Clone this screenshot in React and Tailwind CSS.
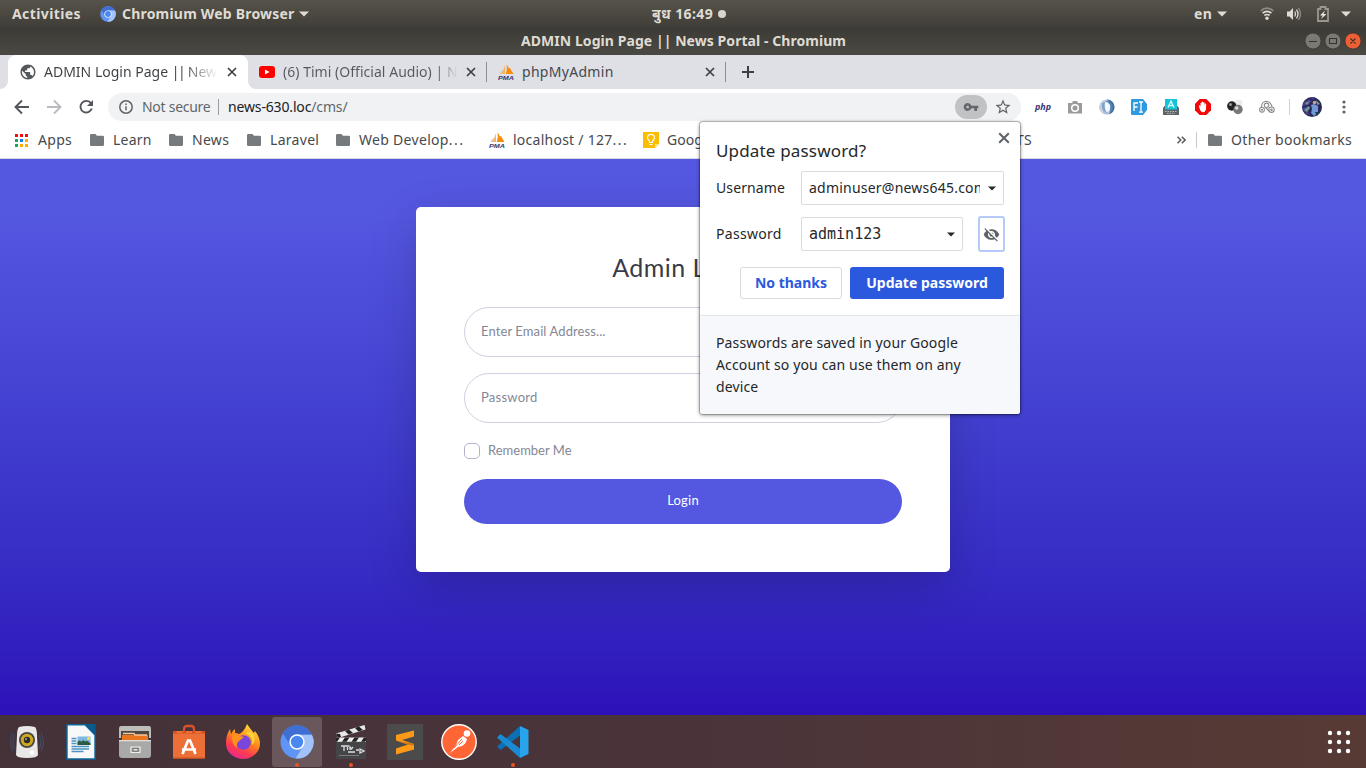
import React from "react";
import { MdPublic, MdVisibilityOff, MdVpnKey, MdStarBorder } from "react-icons/md";

const Caret = ({ className = "h-[6px] w-[10px]" }) => (
  <svg viewBox="0 0 10 6" className={`shrink-0 ${className}`} fill="currentColor">
    <path d="M0 .5h10L5 5.5z" />
  </svg>
);

const Close = ({ className = "" }) => (
  <svg viewBox="0 0 10 10" className={`shrink-0 ${className}`} fill="none" stroke="currentColor" strokeWidth="1.7">
    <path d="M1 1l8 8M9 1L1 9" />
  </svg>
);

const Chromium = ({ className = "" }) => (
  <svg viewBox="0 0 34 34" className={`shrink-0 ${className}`}>
    <circle cx="17" cy="17" r="16.500" fill="#5f95f6" />
    <path d="M2.800 8.500A16.500 16.500 0 0 1 31.900 9.700H17A7.500 7.500 0 0 0 10 19.500z" fill="#3f6fd3" />
    <path d="M17 9.700H31.900A16.500 16.500 0 0 1 15.500 33.500L23.500 20.700z" fill="#a2c2fa" />
    <circle cx="17" cy="17" r="7.700" fill="#fff" />
    <circle cx="17" cy="17" r="6.200" fill="#4a87ef" />
  </svg>
);

const Pma = () => (
  <svg viewBox="0 0 16 16" className="size-4 shrink-0">
    <path d="M7 1L7 10H2.500Q6 6.500 7 1z" fill="#fbb25c" />
    <path d="M8.500 .5Q10 2 11 4.500L12 4Q13.500 7 15.500 10L7.800 10Q9.500 5 8.500 .5z" fill="#f78d0b" />
    <path d="M4.500 5L4 10H1Q3.500 8 4.500 5z" fill="#cfc6bb" />
    <text x="0" y="15.500" textLength="16" lengthAdjust="spacingAndGlyphs" fontSize="6.200" fontWeight="700" fontStyle="italic" fill="#37376f" fontFamily="Liberation Sans, sans-serif">PMA</text>
  </svg>
);

const Folder = () => (
  <svg viewBox="0 0 14 12" className="h-[12px] w-[14px] shrink-0" fill="#757a7e">
    <path d="M1.300 0h4.200l1.400 1.700h5.800A1.300 1.300 0 0 1 14 3v7.700a1.300 1.300 0 0 1-1.300 1.300H1.300A1.300 1.300 0 0 1 0 10.700V1.300A1.300 1.300 0 0 1 1.300 0z" />
  </svg>
);

function TopBar() {
  return (
    <div className="flex h-[27px] items-center bg-linear-to-b from-[#57534a] to-[#403e38] text-[14px] font-bold text-[#dfdbd2]">
      <span className="ml-3 w-[88px] whitespace-nowrap tracking-[0.4px]">Activities</span>
      <Chromium className="size-4" />
      <span className="ml-[6px] w-[177px] whitespace-nowrap tracking-[0.2px]">Chromium Web Browser</span>
      <Caret />
      <span className="ml-[343px] w-[65px] whitespace-nowrap tracking-[0.4px]">बुध 16:49</span>
      <span className="ml-px size-[8px] rounded-full bg-[#d9d5cd]" />
      <span className="ml-[468px] w-[23px] tracking-[0.3px]">en</span>
      <Caret />
      <svg viewBox="0 0 14 13" className="ml-[33px] h-[13px] w-[14px]" fill="none" strokeWidth="1.700">
        <path d="M.8 3.800Q7-1.500 13.200 3.800" stroke="#8f8c85" />
        <path d="M2.600 6.200Q7 2.500 11.400 6.200M4.400 8.500Q7 6.500 9.600 8.500" stroke="#dfdbd2" />
        <circle cx="7" cy="11.200" r="1.700" fill="#dfdbd2" />
      </svg>
      <svg viewBox="0 0 16 14" className="ml-[12px] h-[14px] w-[16px]" fill="none" strokeWidth="1.300">
        <path d="M1 4.500h2.500L7 1v12L3.500 9.500H1z" fill="#dfdbd2" />
        <path d="M8.800 4.500q1.500 2.500 0 5M10.500 2.700q3 4.300 0 8.600" stroke="#dfdbd2" />
        <path d="M12.500 1.200q4 5.800 0 11.600" stroke="#8f8c85" />
      </svg>
      <svg viewBox="0 0 12 16" className="ml-[15px] h-[16px] w-[12px]">
        <path d="M1 3h2.500V1h5v2H11v12H1z" fill="none" stroke="#9b978f" strokeWidth="1.800" />
        <path d="M8 4.500L3 9.500h2.700L4 13l5.500-5H6.500z" fill="#eeeae2" />
      </svg>
      <Caret className="ml-[12px] h-[6px] w-[10px]" />
    </div>
  );
}

function TitleBar() {
  return (
    <div className="flex h-[28px] items-center bg-linear-to-b from-[#3b3a36] to-[#4b4943] pr-[5px]">
      <div className="ml-[521px] w-[788px] pb-[2px] text-[14px] font-bold tracking-[0.06px] whitespace-nowrap text-[#dfdbd2]">
        ADMIN Login Page || News Portal - Chromium
      </div>
      <svg viewBox="0 0 56 18" className="h-[18px] w-[56px] shrink-0">
        <circle cx="8" cy="9" r="8" fill="#7b7972" stroke="#33322e" strokeWidth=".7" />
        <circle cx="28" cy="9" r="8" fill="#7b7972" stroke="#33322e" strokeWidth=".7" />
        <circle cx="48" cy="9" r="8" fill="#ee6034" stroke="#33322e" strokeWidth=".7" />
        <path d="M4 9.500h8M24.500 6.500h7v5h-7zM45.500 6.500l5 5M50.500 6.500l-5 5" fill="none" stroke="#34332f" strokeWidth="1.100" />
      </svg>
    </div>
  );
}

function Tabs() {
  return (
    <div className="flex h-[34px] bg-[#dee0e6] text-[14px] text-[#45494d]">
      <div className="flex w-2 items-end bg-white">
        <div className="h-full w-2 rounded-br-[8px] bg-[#dee0e6]" />
      </div>
      <div className="flex w-[240px] items-center rounded-t-[8px] bg-white pl-3">
        <MdPublic className="-ml-px size-[18px] shrink-0 text-[#54585d]" />
        <span className="ml-[7px] w-[174px] overflow-hidden bg-linear-to-r from-[#3c4043] from-80% to-transparent bg-clip-text pb-[2px] whitespace-nowrap text-transparent">
          ADMIN Login Page <span className="tracking-[-1.5px]">||</span> News Portal
        </span>
        <Close className="ml-[9px] size-[10px] text-[#3c4043]" />
      </div>
      <div className="flex w-[238px] items-center bg-white">
        <div className="flex h-full w-full items-center rounded-bl-[8px] bg-[#dee0e6] pl-[11px]">
          <svg viewBox="0 0 16 12" className="h-[12px] w-4 shrink-0">
            <rect width="16" height="12" rx="3" fill="#f00" />
            <path d="M6 3.500v5L10.500 6z" fill="#fff" />
          </svg>
          <span className="ml-2 w-[175px] overflow-hidden bg-linear-to-r from-[#55595e] from-88% to-transparent bg-clip-text pb-[2px] tracking-[0.03px] whitespace-nowrap text-transparent">(6) Timi (Official Audio) | Neetesh</span>
          <Close className="ml-[8px] size-[10px] text-[#3c4043]" />
        </div>
      </div>
      <div className="flex grow items-center">
        <div className="h-5 w-px bg-[#8b8f95]" />
        <div className="ml-[11px] flex"><Pma /></div>
        <span className="ml-2 w-[183px] pb-[2px] tracking-[0.3px] whitespace-nowrap">phpMyAdmin</span>
        <Close className="size-[10px] text-[#3c4043]" />
        <div className="ml-[10px] h-5 w-px bg-[#8b8f95]" />
        <svg viewBox="0 0 12 12" className="ml-4 size-3" stroke="#3c4043" strokeWidth="2"><path d="M6 0v12M0 6h12" /></svg>
      </div>
    </div>
  );
}

function Extensions() {
  return (
    <div className="flex items-center gap-4">
      <span className="flex w-4 justify-center text-[9px] font-bold italic text-[#3b3575]">php</span>
      <svg viewBox="0 0 16 16" className="size-4"><path d="M1 4h4l1-2h4l1 2h4v10.500H1z" fill="#9b9b9b" /><circle cx="8" cy="9" r="3.300" fill="none" stroke="#fff" strokeWidth="1.600" /></svg>
      <svg viewBox="0 0 16 16" className="size-4">
        <circle cx="8" cy="8" r="7.600" fill="#a9bdd6" />
        <path d="M8 .4A7.600 7.600 0 0 1 10 15.300Q16 8 8 .4z" fill="#44719f" />
        <path d="M8 .4A7.600 7.600 0 0 0 6 15.400Q0 9 8 .4z" fill="#c6d1e0" />
        <ellipse cx="8" cy="8" rx="4" ry="5" fill="#f4f7fb" />
        <path d="M6 2.500Q13 3 10.500 13.500 15 10 13 5 10 1 6 2.500z" fill="#5684b8" />
        <path d="M3 4Q1.500 11 7.500 13.500 5 9 6 3z" fill="#7fa0c9" />
      </svg>
      <svg viewBox="0 0 16 16" className="size-4">
        <path d="M1 0h11l4 5v6l-4 5H1a1 1 0 0 1-1-1V1a1 1 0 0 1 1-1z" fill="#2f9ae0" />
        <path d="M7 4H3v8M3 8h3.500M8 3h1.500l.5.700.5-.7H12M10 3.500v9M8 13.200h1.500l.5-.7.5.7H12" fill="none" stroke="#fff" strokeWidth="1.300" />
      </svg>
      <svg viewBox="0 0 16 16" className="size-4">
        <path d="M1.500 7h13L16 9v7H0V9z" fill="#5e6366" /><path d="M2 0h12v10.500H2z" fill="#15c4d8" />
        <path d="M5 8.500L8 2l3 6.500M6 6.500h4" fill="none" stroke="#d9fbff" strokeWidth="1.300" />
        <path d="M2 12.500h12M4 14.300h8" stroke="#b8bdc0" strokeDasharray="1.500 1" />
      </svg>
      <svg viewBox="0 0 16 16" className="size-4">
        <path d="M4.700 0h6.600L16 4.700v6.600L11.300 16H4.700L0 11.300V4.700z" fill="#f10808" />
        <path d="M4.300 8.500L4 6.500q.7-.6 1.200 0L5.500 8V4q.6-.8 1.200 0l.1 2.800V3q.7-.8 1.400 0l.1 3.800V3.500q.7-.7 1.300 0V7.500l.3-2.700q.8-.6 1.300.1L11 10.500Q10 13.500 7.500 13.200 5.500 13 4.300 8.500z" fill="#fff" />
      </svg>
      <svg viewBox="0 0 16 16" className="size-4">
        <circle cx="11.500" cy="4.500" r="4" fill="#ececec" /><circle cx="4.800" cy="7" r="4.700" fill="#222" /><circle cx="11" cy="10.500" r="4.700" fill="#777" />
        <circle cx="3.500" cy="5.500" r="1.500" fill="#999" /><circle cx="9.700" cy="9" r="1.800" fill="#ddd" />
      </svg>
      <svg viewBox="0 0 16 16" className="size-4" fill="none" stroke="#8c8c8c" strokeWidth="1.100">
        <path d="M2.500 8Q2.500 3 7 2.300 12.500 3 13 8" />
        <circle cx="7.500" cy="6.300" r="2.200" /><circle cx="3" cy="10.700" r="2.400" /><circle cx="12.500" cy="10.700" r="2.700" />
        <circle cx="3" cy="10.700" r=".5" /><circle cx="12.500" cy="10.700" r=".7" /><path d="M6.500 8.500l3.500 3.500" />
      </svg>
    </div>
  );
}

function Toolbar() {
  return (
    <div className="flex h-[36px] items-center bg-white text-[14px]">
      <svg viewBox="0 0 84 16" className="ml-[14px] h-4 w-[84px] shrink-0" fill="none" strokeWidth="1.900">
        <path d="M15 8H2M8 1.500L1.500 8 8 14.500" stroke="#53575c" />
        <path d="M33 8h13M40 1.500L46.500 8 40 14.500" stroke="#b9bbbe" />
        <path d="M77 4.300A5.800 5.800 0 1 0 77.800 9.500" stroke="#53575c" />
        <path d="M79 1v6h-6z" fill="#53575c" />
      </svg>
      <div className="ml-[10px] flex h-7 w-[913px] shrink-0 items-center rounded-full bg-[#f0f2f4] pl-[11px] text-[#62666b]">
        <svg viewBox="0 0 14 14" className="size-[14px] shrink-0" fill="none" stroke="#5f6368" strokeWidth="1.500">
          <circle cx="7" cy="7" r="6.200" /><path d="M7 6.300V10.300M7 3.500v1.600" />
        </svg>
        <span className="ml-[9px] w-[76px] shrink-0 pb-px tracking-[-0.27px] whitespace-nowrap">Not secure</span>
        <div className="h-4 w-px bg-[#9a9da1]" />
        <span className="ml-[9px] w-[727px] shrink-0 pb-px tracking-[-0.15px] whitespace-nowrap"><span className="text-[#202124]">news-630.loc</span>/cms/</span>
        <div className="flex h-6 w-8 shrink-0 items-center justify-center rounded-full bg-[#c0c2c4]">
          <MdVpnKey className="size-4 text-[#64686c]" />
        </div>
        <MdStarBorder className="ml-[7px] size-[18px] shrink-0 text-[#5f6368]" />
      </div>
      <div className="ml-[14px]"><Extensions /></div>
      <div className="ml-[14px] h-4 w-px bg-[#cfd1d4]" />
      <svg viewBox="0 0 20 20" className="ml-[12px] size-5 shrink-0">
        <circle cx="10" cy="10" r="10" fill="#28295a" />
        <path d="M1 6l6-4 3 2-4 4-5 1zM0 11l7-2-2 4 3 5-4-1zM8 0h5l-2 3z" fill="#4b3f8e" />
        <path d="M2 13l5-4 1 2-3 4zM14 3l4 4-3 1zM3 6l5-2-3 4z" fill="#6f9b93" />
        <path d="M9 8l3-1 4 2v7l-4 3-3-3 1-4z" fill="#7198d0" /><circle cx="12.500" cy="5.500" r="1.800" fill="#caa090" />
        <path d="M13 15l2 4 3-4z" fill="#193d59" />
      </svg>
      <svg viewBox="0 0 4 14" className="ml-[20px] h-[14px] w-1 shrink-0" fill="#5f6368"><circle cx="2" cy="2" r="1.600" /><circle cx="2" cy="7" r="1.600" /><circle cx="2" cy="12" r="1.600" /></svg>
    </div>
  );
}

function Bookmarks() {
  return (
    <div className="flex h-[34px] items-center border-b border-[#d9d9e2] bg-white pb-[3px] pl-[15px] text-[14px] whitespace-nowrap text-[#46494d]">
      <svg viewBox="0 0 13 13" className="size-[13px] shrink-0">
        <path d="M0 0h3v3H0zM5 0h3v3H5zM10 0h3v3h-3z" fill="#f20c0c" />
        <path d="M0 5h3v3H0zM0 10h3v3H0z" fill="#18a85b" /><path d="M5 5h3v3H5z" fill="#177cf2" />
        <path d="M10 5h3v3h-3zM5 10h3v3H5zM10 10h3v3h-3z" fill="#fcae08" />
      </svg>
      <span className="ml-[10px] w-[52px] pb-[2px] tracking-[0.3px]">Apps</span>
      <Folder /><span className="ml-[9px] w-[56px] pb-[2px] tracking-[0.2px]">Learn</span>
      <Folder /><span className="ml-[9px] w-[55px] pb-[2px] tracking-[0.3px]">News</span>
      <Folder /><span className="ml-[9px] w-[66px] pb-[2px] tracking-[0.3px]">Laravel</span>
      <Folder /><span className="ml-[9px] w-[130px] pb-[2px] tracking-[0.3px]">Web Develop<span className="tracking-[1.500px]">...</span></span>
      <Pma /><span className="ml-2 w-[130px] pb-[2px] tracking-[0.25px]">localhost / 127<span className="tracking-[1.500px]">...</span></span>
      <svg viewBox="0 0 16 16" className="size-4 shrink-0">
        <path d="M0 0h16v12l-4 4H0z" fill="#fbbc04" /><path d="M16 12l-4 4v-4z" fill="#fde08a" />
        <path d="M6.500 10.500V9Q4.500 7.500 4.600 5.800a3.400 3.400 0 0 1 6.800 0Q11.500 7.500 9.500 9v1.500zM6.500 12.500h3" fill="none" stroke="#fff" strokeWidth="1.100" />
      </svg>
      <span className="ml-2 w-[349px] pb-[2px]">Google Keep</span>
      <span className="w-[17px] pb-[2px] tracking-[0.3px]">TS</span>
      <svg viewBox="0 0 9 8" className="ml-[144px] h-2 w-[9px] shrink-0" fill="none" stroke="#55595e" strokeWidth="1.500"><path d="M.5.700L3.800 4 .5 7.300M4.800.7L8.100 4 4.800 7.300" /></svg>
      <div className="ml-[10px] h-4 w-px bg-[#c6c9cd]" />
      <div className="ml-[11px] flex"><Folder /></div>
      <span className="ml-[9px] pb-[2px] tracking-[0.34px]">Other bookmarks</span>
    </div>
  );
}

function LoginCard() {
  return (
    <div className="mt-[48px] ml-[416px] h-[365px] w-[534px] rounded-[5px] bg-white p-12 font-[Lato,sans-serif] text-[13px] text-[#858796] shadow-[0_16px_48px_rgba(0,0,0,0.175)]">
      <h1 className="-mt-[2px] mb-[25px] text-center text-[25px] leading-[29px] tracking-[0.45px] text-[#3a3b45]">Admin Login</h1>
      <div className="mb-4 flex h-[50px] items-center rounded-full border border-[#d0d0e2] px-4 tracking-[0.1px]">Enter Email Address...</div>
      <div className="mb-4 flex h-[50px] items-center rounded-full border border-[#d0d0e2] px-4 tracking-[0.25px]">Password</div>
      <div className="mb-4 flex h-6 items-center gap-2">
        <div className="size-4 rounded-[5px] border border-[#b3b2cb]" />
        <span>Remember Me</span>
      </div>
      <div className="flex h-[45px] items-center justify-center rounded-full bg-[#5457df] pb-[2px] tracking-[0.2px] text-white">Login</div>
    </div>
  );
}

function PasswordPopup() {
  return (
    <div className="absolute top-[122px] left-[700px] h-[292px] w-[320px] overflow-hidden rounded-[3px] bg-white text-[14px] text-[#25272a] shadow-[0_0_1px_1px_rgba(0,0,0,0.25),0_1px_4px_rgba(0,0,0,0.45)]">
      <div className="h-[193px] px-4 pt-[10px]">
        <div className="flex h-[39px] justify-between">
          <span className="mt-[7px] text-[17px] leading-[24px] tracking-[0.17px] whitespace-nowrap">Update password?</span>
          <Close className="-mr-[6px] size-[12px] text-[#5f6368]" />
        </div>
        <div className="flex h-[34px] items-center">
          <span className="w-[85px] pb-[2px] tracking-[0.1px]">Username</span>
          <div className="flex h-[34px] w-[203px] items-center rounded-[2px] border border-[#d9dbde] pl-[7px]">
            <span className="w-[171px] overflow-hidden pb-[2px] tracking-[0.22px] whitespace-nowrap">adminuser@news645.com</span>
            <Caret className="ml-[8px] h-[5px] w-[8px]" />
          </div>
        </div>
        <div className="mt-[11px] flex h-[36px] items-center">
          <span className="w-[85px] shrink-0 pb-[2px] tracking-[0.3px]">Password</span>
          <div className="flex h-[34px] w-[162px] shrink-0 items-center justify-between rounded-[2px] border border-[#d9dbde] px-[7px]">
            <span className="font-['DejaVu_Sans_Mono',monospace] text-[15px]">admin123</span>
            <Caret className="h-[5px] w-[8px]" />
          </div>
          <div className="ml-[15px] flex h-[36px] w-[27px] shrink-0 items-center justify-center rounded-[3px] border-2 border-[#b6caf8]">
            <MdVisibilityOff className="size-[17px] shrink-0 text-[#5f6368]" />
          </div>
        </div>
        <div className="mt-[15px] flex justify-end gap-2 font-bold">
          <div className="flex h-8 w-[102px] items-center justify-center rounded-[3px] border border-[#d9dbde] pb-[2px] whitespace-nowrap text-[#2b59de]">No thanks</div>
          <div className="flex h-8 w-[154px] items-center justify-center rounded-[3px] bg-[#2a59dd] pb-[2px] whitespace-nowrap text-white">Update password</div>
        </div>
      </div>
      <div className="h-[99px] border-t border-[#e3e5e8] bg-[#f7f8fb] px-4 pt-[16px] leading-[22px]">
        <div className="tracking-[0.14px] whitespace-nowrap">Passwords are saved in your Google<br />Account so you can use them on any<br />device</div>
      </div>
    </div>
  );
}

const dockIcons = [
  <svg viewBox="0 0 36 36" className="size-9">
    <path d="M4 9Q-1 18 4 27M32 9q5 9 0 18M6 11q-4 7 0 14M30 11q4 7 0 14" fill="none" stroke="#444a62" strokeWidth="1.200" />
    <path d="M10 3Q18 1 26 3 28 5 28 12L29 31Q28 34 18 34T7 31L8 12Q8 5 10 3z" fill="#e9e8e6" />
    <circle cx="18" cy="16" r="8" fill="#454542" /><circle cx="18" cy="16" r="6.200" fill="#cfa91f" /><circle cx="18" cy="16" r="3.200" fill="#2c2c2c" /><circle cx="17" cy="15" r="1.200" fill="#888" />
    <circle cx="23" cy="28.500" r="2.300" fill="#fff" />
  </svg>,
  <svg viewBox="0 0 36 36" className="size-9">
    <path d="M4 .8h18L32 11v24H4z" fill="#f8f8f8" stroke="#0d6699" strokeWidth="1.400" /><path d="M21.500 0H32.700V11z" fill="#0b5a8c" />
    <path d="M8.500 14.500h5M8.500 17h5M8.500 19.500h5M8.500 22.500h17.500M8.500 25h17.500M8.500 27.500h12" stroke="#4b94c1" strokeWidth="1.300" />
    <path d="M14.500 12.500H27.500V21H14.500z" fill="#7db9e0" /><path d="M14.500 21v-3q2-3 4 0 1-3 3.500-.5 2-2 5.500 2V21z" fill="#2c5a45" /><circle cx="25.500" cy="14.500" r="1.500" fill="#ffe14d" />
  </svg>,
  <svg viewBox="0 0 36 36" className="size-9">
    <path d="M4 2h28q2 0 2 3v9H2V5q0-3 2-3z" fill="#bdbdb9" /><path d="M4 7h28v9H4z" fill="#4b4744" />
    <path d="M5 11h26v5H5z" fill="#e9761c" /><path d="M6 9.500h11l1 1.500h12" fill="none" stroke="#f6c79a" strokeWidth="1.400" />
    <path d="M2 16h32v15q0 3-3 3H5q-3 0-3-3z" fill="#a9a9a7" /><path d="M2 16h32v1.300H2z" fill="#dedede" />
    <path d="M14 23h9v5.500h-9z" fill="#999" stroke="#eee" strokeWidth="1.200" /><path d="M16 24.700h5V27h-5z" fill="#fff" stroke="#555" strokeWidth=".8" />
  </svg>,
  <svg viewBox="0 0 36 36" className="size-9">
    <path d="M13 10V5q0-3 3-3h4q3 0 3 3v5" fill="none" stroke="#d6522a" strokeWidth="2.300" />
    <path d="M2 7h32v27.500H2z" fill="#ec6f38" /><path d="M2 7h3l1 2h6V7h3v2h6V7h3v2h6l1-2h3v2.500H2zM2 33.500h32v1H2z" fill="#d2521f" />
    <path d="M11.500 30L17 16.500h2L24.500 30M11 25.500h14" fill="none" stroke="#fff" strokeWidth="2.700" />
  </svg>,
  <svg viewBox="0 0 36 36" className="size-9">
    <defs><linearGradient id="fox" x1=".8" y1="0" x2=".3" y2="1"><stop offset="0" stopColor="#ffe53c" /><stop offset=".45" stopColor="#ff8a1c" /><stop offset=".75" stopColor="#ff3a50" /><stop offset="1" stopColor="#e42a93" /></linearGradient></defs>
    <path d="M22 0Q26 6 29 9l1-2Q35 13 35 20A17 15.500 0 0 1 1 19Q1 11 5 5l1 5Q8 6 10 5v4l4 1Q19 8 22 0z" fill="url(#fox)" />
    <circle cx="18.500" cy="18.500" r="7.300" fill="#7946db" />
    <path d="M7 10Q12 7 15 12l4 1-5 4q-3 2-2 7-6-4-5-14z" fill="#ff901d" /><path d="M21 9q8 4 6 12 4-3 2-10-3-4-8-2z" fill="#ffd63b" />
  </svg>,
  <Chromium className="size-[34px]" />,
  <svg viewBox="0 0 36 36" className="size-9">
    <path d="M3 9.500L31.500 1l1 4.500L5 14z" fill="#e8e8e8" />
    <path d="M3 9.500l4 .5 1 3-3 1zM12 7l4-1.500 4 3.500-4.500 1.500zM22 4l4-1.500 4 3.500-4.500 1.500z" fill="#222" />
    <path d="M3 13.500h30V34q0 1-1 1H4q-1 0-1-1z" fill="#444546" /><path d="M3 13.500h30v4.300H3z" fill="#ededed" />
    <path d="M3 13.500h4l-3 4.300H3zM12 13.500h4.500l-3 4.300H9zM21.500 13.500H26l-3 4.300h-4.500zM31 13.500h2v3l-1 1.300h-4z" fill="#222" />
    <path d="M8 22h8M11 22v5M14.500 23v3M17 26v-3l1.500 2 1.500-2M15 28h7M23 26h3M27 25v4l4-2z" fill="none" stroke="#ddd" strokeWidth="1.300" /><path d="M6 31.500h20" stroke="#888" strokeWidth=".8" />
  </svg>,
  <svg viewBox="0 0 36 36" className="size-9">
    <path d="M0 0h36v36H0z" fill="#4b4b4b" />
    <path d="M27 6.500v6L15 16l12 4v5.500L9 30.500v-6l12-4-12-4V11z" fill="#ff9a19" /><path d="M9 16.500l18 3.500v1.500l-7-1z" fill="#cd7410" />
  </svg>,
  <svg viewBox="0 0 36 36" className="size-9">
    <circle cx="18" cy="18" r="17.200" fill="#ff6535" stroke="#fff" strokeWidth="1.400" />
    <circle cx="26" cy="9.500" r="3.300" fill="#fff" /><path d="M22 12l4 3q-1 5-5 7l-4 1-8 6 6-8 2-5z" fill="#fff" /><path d="M13 24l8-9M18 21l4-4" stroke="#ff6535" strokeWidth="1" />
  </svg>,
  <svg viewBox="0 0 36 36" className="size-9">
    <path d="M25 2L2 22.500 5.500 26 27 10z" fill="#0b70b5" />
    <path d="M25 34L2 13.500 5.500 10 27 26z" fill="#1a8ad2" />
    <path d="M25 2l8.500 4v24L25 34z" fill="#28a4ec" />
  </svg>,
];

function Dock() {
  return (
    <div className="flex h-[53px] items-center bg-linear-to-r from-[#443238] via-[#4a343a] to-[#573a34]">
      {dockIcons.map((icon, i) => (
        <div key={i} className="relative flex h-[53px] w-[54px] items-start justify-center pt-[2px]">
          <div className={`flex size-[50px] items-center justify-center rounded-[3px] ${i === 5 ? "bg-[#6a575c]" : ""}`}>{icon}</div>
          {(i === 5 || i === 6 || i === 9) && <div className="absolute bottom-[1px] left-[25px] size-[4px] rounded-full bg-[#ea5420]" />}
        </div>
      ))}
      <svg viewBox="0 0 24 24" className="ml-[787px] size-6 shrink-0" fill="#fff">
        {[3, 12, 21].map((y) => [3, 12, 21].map((x) => <circle key={`${x}-${y}`} cx={x} cy={y} r="2.200" />))}
      </svg>
    </div>
  );
}

export default function App() {
  return (
    <div className="relative flex h-[768px] w-[1366px] flex-col overflow-hidden font-['Noto_Sans',sans-serif]">
      <TopBar />
      <TitleBar />
      <Tabs />
      <Toolbar />
      <Bookmarks />
      <main className="flow-root h-[556px] bg-linear-to-b from-[#5457e0] from-10% to-[#2d10b9]"><LoginCard /></main>
      <Dock />
      <PasswordPopup />
    </div>
  );
}
